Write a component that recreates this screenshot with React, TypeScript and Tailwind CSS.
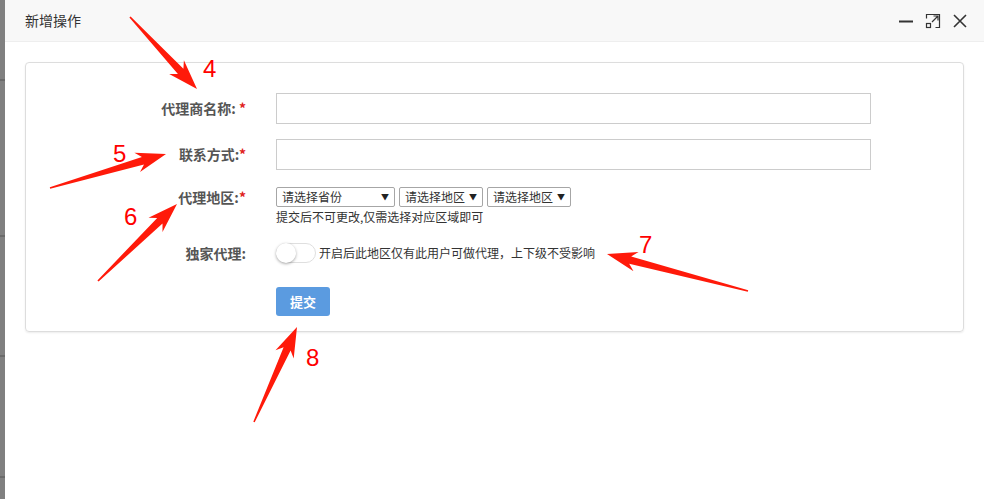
import React from "react";

type Pt = [number, number];

function arrowPoints(tail: Pt, tip: Pt, h = 24, hw = 10, sw = 3.8, tw = 0.8): string {
  const dx = tip[0] - tail[0];
  const dy = tip[1] - tail[1];
  const len = Math.hypot(dx, dy);
  const d: Pt = [dx / len, dy / len];
  const n: Pt = [-d[1], d[0]];
  const B: Pt = [tip[0] - d[0] * h, tip[1] - d[1] * h];
  const W: Pt = [tip[0] - d[0] * (h + 6), tip[1] - d[1] * (h + 6)];
  const pts: Pt[] = [
    [tail[0] + n[0] * tw, tail[1] + n[1] * tw],
    [B[0] + n[0] * sw, B[1] + n[1] * sw],
    [W[0] + n[0] * hw, W[1] + n[1] * hw],
    tip,
    [W[0] - n[0] * hw, W[1] - n[1] * hw],
    [B[0] - n[0] * sw, B[1] - n[1] * sw],
    [tail[0] - n[0] * tw, tail[1] - n[1] * tw],
  ];
  return pts.map((p) => `${p[0].toFixed(1)},${p[1].toFixed(1)}`).join(" ");
}

const arrows: { tail: Pt; tip: Pt }[] = [
  { tail: [130, 17], tip: [197, 89] },
  { tail: [50, 188], tip: [166, 154] },
  { tail: [98, 281], tip: [177, 204] },
  { tail: [748, 291], tip: [607, 254] },
  { tail: [254, 422], tip: [297, 327] },
];

const numbers = [
  { t: "4", x: 203, y: 77 },
  { t: "5", x: 113, y: 162 },
  { t: "6", x: 124, y: 225 },
  { t: "7", x: 639, y: 253 },
  { t: "8", x: 306, y: 366 },
];

function Select({ text, w }: { text: string; w: string }) {
  return (
    <div
      className={`${w} h-[20px] border border-[#a6a6a6] rounded-[2px] bg-white flex items-center justify-between pl-[5px] pr-[5px] text-[12px] text-[#333] leading-none whitespace-nowrap overflow-hidden`}
    >
      <span>{text}</span>
      <span className="text-[8px] text-[#222] ml-[3px]">▼</span>
    </div>
  );
}

export default function App() {
  return (
    <div
      className="relative w-[984px] h-[499px] overflow-hidden flex bg-white"
      style={{ fontFamily: '"Noto Sans CJK SC", "Noto Sans", "Liberation Sans", sans-serif' }}
    >
      {/* background strip */}
      <div className="w-[5px] h-full bg-[#808080] flex flex-col">
        <div className="h-[79px]" />
        <div className="h-[2px] bg-[#6a6a6a]" />
        <div className="h-[154px]" />
        <div className="h-[2px] bg-[#6a6a6a]" />
        <div className="h-[118px]" />
        <div className="h-[2px] bg-[#6a6a6a]" />
        <div className="h-[119px]" />
        <div className="h-[2px] bg-[#6a6a6a]" />
      </div>

      {/* dialog */}
      <div className="flex-1 flex flex-col bg-white">
        <div className="h-[42px] bg-[#f8f8f8] border-b border-[#eee] flex items-center justify-between pl-[20px] pr-[16px]">
          <span className="text-[14px] text-[#333]">新增操作</span>
          <div className="flex items-center gap-[11px] text-[#333]">
            <svg width="16" height="16" viewBox="0 0 16 16">
              <line x1="1" y1="8.5" x2="15" y2="8.5" stroke="#333" strokeWidth="2" />
            </svg>
            <svg width="16" height="16" viewBox="0 0 16 16" fill="none" stroke="#333" strokeWidth="1.2">
              <path d="M1.5 5.5 V1.5 H14.5 V14.5 H10.5" />
              <rect x="1.5" y="10.5" width="4" height="4" />
              <path d="M7 9 L13 3 M8.5 3 H13 V7.5" />
            </svg>
            <svg width="16" height="16" viewBox="0 0 16 16" fill="none" stroke="#333" strokeWidth="1.6">
              <path d="M2 2 L14 14 M14 2 L2 14" />
            </svg>
          </div>
        </div>

        <div className="mx-[20px] mt-[20px] h-[270px] border border-[#ddd] rounded-[4px] shadow-[0_1px_2px_rgba(0,0,0,0.08)] pt-[30px]">
          {/* row 1 */}
          <div className="flex items-center h-[31px]">
            <div className="w-[220px] text-right text-[14px] font-bold text-[#555]">
              代理商名称: <span className="text-[#e02020]">*</span>
            </div>
            <div className="ml-[30px] w-[595px] h-[31px] border border-[#ccc] bg-white" />
          </div>
          {/* row 2 */}
          <div className="flex items-center h-[31px] mt-[15px]">
            <div className="w-[220px] text-right text-[14px] font-bold text-[#555]">
              联系方式:<span className="text-[#e02020]">*</span>
            </div>
            <div className="ml-[30px] w-[595px] h-[31px] border border-[#ccc] bg-white" />
          </div>
          {/* row 3 */}
          <div className="flex items-start mt-[17px]">
            <div className="w-[220px] h-[20px] flex items-center justify-end text-[14px] font-bold text-[#555]">
              代理地区:<span className="text-[#e02020]">*</span>
            </div>
            <div className="ml-[30px] flex flex-col">
              <div className="flex gap-[4px]">
                <Select text="请选择省份" w="w-[119px]" />
                <Select text="请选择地区" w="w-[84px]" />
                <Select text="请选择地区" w="w-[84px]" />
              </div>
              <div className="text-[12px] text-[#333] leading-[18px] mt-[1px]">提交后不可更改,仅需选择对应区域即可</div>
            </div>
          </div>
          {/* row 4 */}
          <div className="flex items-center h-[22px] mt-[16px]">
            <div className="w-[220px] text-right text-[14px] font-bold text-[#555]">独家代理:</div>
            <div className="ml-[30px] flex items-center">
              <div className="w-[40px] h-[20px] rounded-full border border-[#dfdfdf] bg-white relative">
                <div className="absolute left-[-1px] top-[-1px] w-[20px] h-[20px] rounded-full bg-white shadow-[0_1px_3px_rgba(0,0,0,0.35)]" />
              </div>
              <span className="ml-[3px] text-[12px] text-[#333]">开启后此地区仅有此用户可做代理，上下级不受影响</span>
            </div>
          </div>
          {/* row 5 */}
          <div className="flex mt-[23px]">
            <div className="w-[220px]" />
            <button className="ml-[30px] w-[54px] h-[29px] rounded-[3px] bg-[#5b9be0] text-white text-[13px] font-bold">
              提交
            </button>
          </div>
        </div>
      </div>

      {/* annotations */}
      <svg className="absolute inset-0 pointer-events-none" width="984" height="499" viewBox="0 0 984 499">
        {arrows.map((a, i) => (
          <polygon key={i} points={arrowPoints(a.tail, a.tip)} fill="#ff1a0a" />
        ))}
        {numbers.map((n) => (
          <text
            key={n.t}
            x={n.x}
            y={n.y}
            fill="#ff0000"
            fontSize="24"
            fontFamily='"Liberation Sans", Arial, sans-serif'
          >
            {n.t}
          </text>
        ))}
      </svg>
    </div>
  );
}
